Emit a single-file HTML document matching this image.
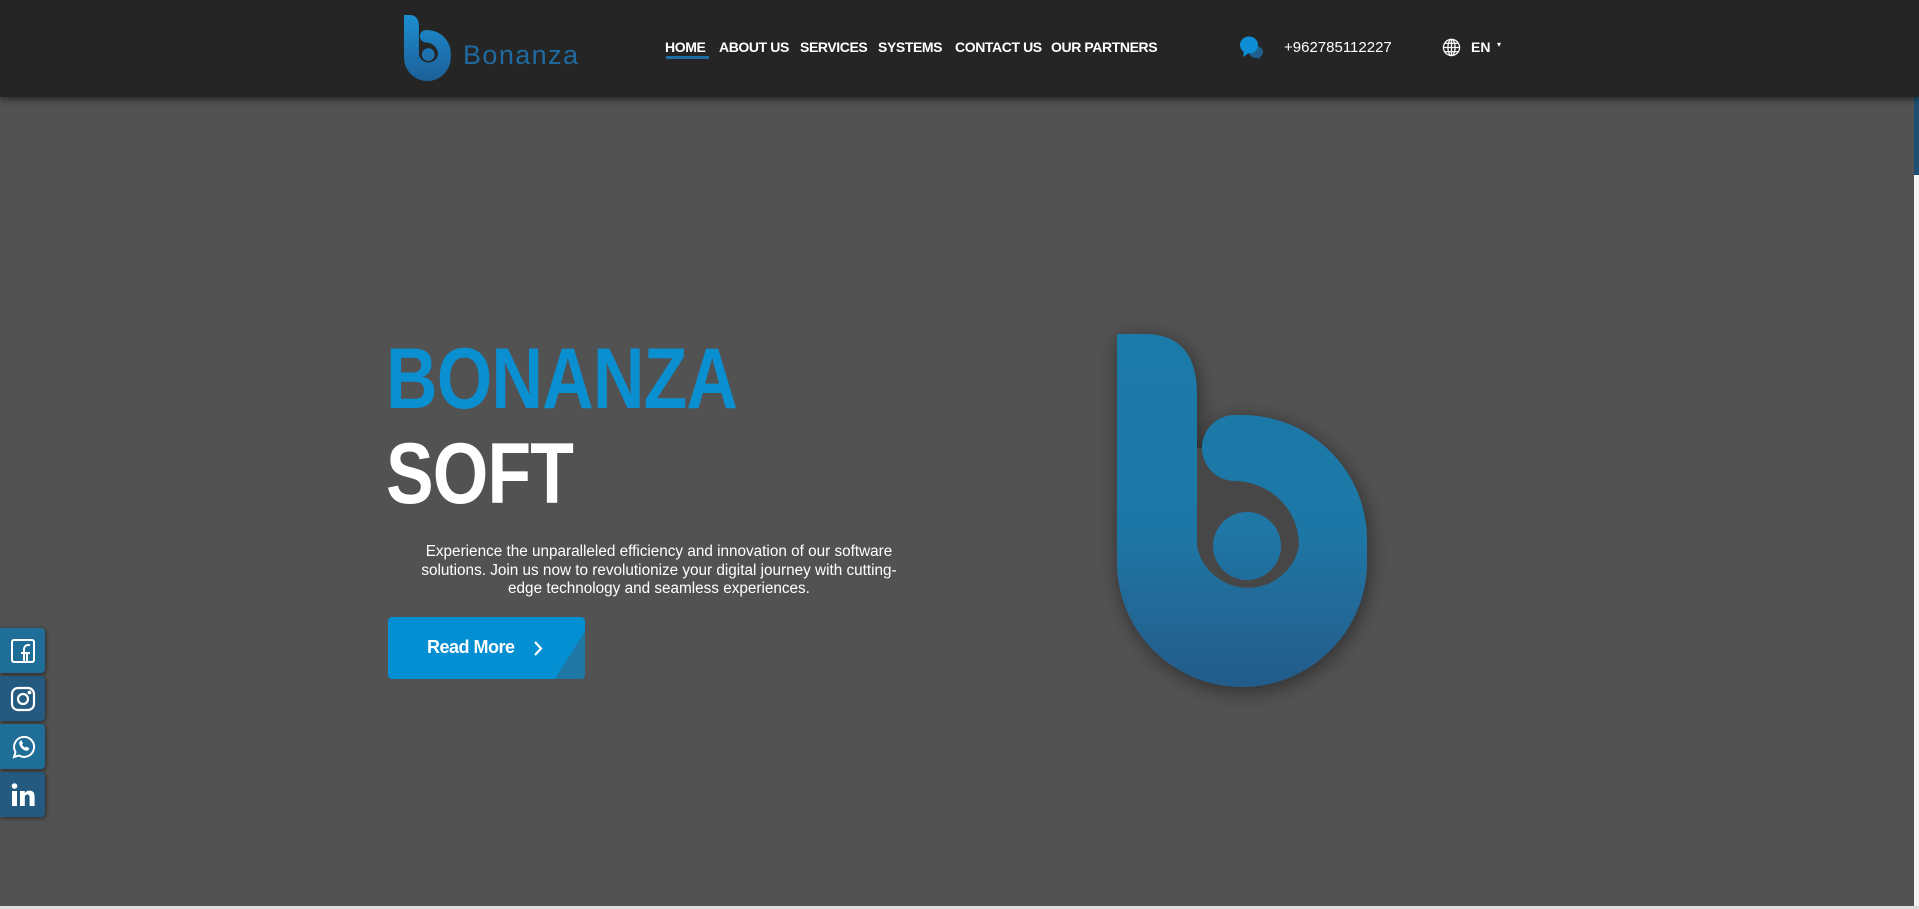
<!DOCTYPE html>
<html><head><meta charset="utf-8"><style>
*{margin:0;padding:0;box-sizing:border-box}
body{width:1919px;height:909px;overflow:hidden;background:#525252;font-family:"Liberation Sans",sans-serif;position:relative}
.hdr{position:absolute;left:0;top:0;width:1919px;height:97px;background:#252525;box-shadow:0 3px 6px rgba(0,0,0,.45);z-index:5}
.nav{position:absolute;top:39px;color:#fff;font-weight:bold;font-size:14px;letter-spacing:-0.4px;white-space:nowrap}
.t{position:absolute;white-space:nowrap}
.soc{position:absolute;left:0;width:45px;height:45px;border-radius:0 4px 4px 0;box-shadow:1px 1px 4px rgba(0,0,0,.5);display:flex;align-items:center;justify-content:center}
</style></head><body>
<svg width="0" height="0" style="position:absolute">
  <defs>
    <linearGradient id="g" x1="0" y1="334" x2="0" y2="687" gradientUnits="userSpaceOnUse"><stop offset="0" stop-color="#1f7aa8"/><stop offset="0.55" stop-color="#1f77a6"/><stop offset="1" stop-color="#225b8a"/></linearGradient>
    <linearGradient id="g2" x1="0" y1="334" x2="0" y2="687" gradientUnits="userSpaceOnUse"><stop offset="0" stop-color="#1b8fd0"/><stop offset="1" stop-color="#1d5f98"/></linearGradient>
  </defs>
</svg>
<div class="hdr">
  <svg style="position:absolute;left:0;top:0" width="700" height="97">
    <g transform="translate(195.1,-47.5) scale(0.187)">
      <path fill="url(#g2)" d="M1117 334 L1145 334 Q1197 334 1197 395 L1197 562 L1117 562 Z"/>
      <path fill="url(#g2)" d="M1235 415 L1242 415 A125 125 0 0 1 1367 540 L1367 562 A125 125 0 0 1 1117 562 L1197 562 L1197 448 L1202 448 A33 33 0 0 1 1235 415 Z"/>
      <path fill="#252525" d="M1202 448 A33 33 0 0 0 1235 481 C1265 481 1299 505 1299 546 A52 52 0 0 1 1197 546 L1197 448 Z"/>
      <circle cx="1247" cy="546" r="34" fill="url(#g2)"/>
    </g>
  </svg>
  <div class="t" style="left:463px;top:40px;color:#1f6aa0;font-size:27px;letter-spacing:1.4px">Bonanza</div>
  <div class="nav" style="left:665px">HOME</div>
  <div style="position:absolute;left:666px;top:56px;width:43px;height:3px;background:#1d6fa3"></div>
  <div class="nav" style="left:719px">ABOUT US</div>
  <div class="nav" style="left:800px">SERVICES</div>
  <div class="nav" style="left:878px">SYSTEMS</div>
  <div class="nav" style="left:955px">CONTACT US</div>
  <div class="nav" style="left:1051px">OUR PARTNERS</div>
  <svg style="position:absolute;left:1239px;top:35px" width="26" height="26" viewBox="0 0 26 26">
    <ellipse cx="17" cy="17" rx="7" ry="6" fill="#1d5f8e"/><path d="M17 21 l4 4 -1-5z" fill="#1d5f8e"/>
    <ellipse cx="10" cy="10" rx="9" ry="8.5" fill="#0d8ed6"/><path d="M5 16 l-1 6 6-4z" fill="#0d8ed6"/>
  </svg>
  <div class="t" style="left:1284px;top:39px;color:#fff;font-size:15px">+962785112227</div>
  <svg style="position:absolute;left:1442px;top:38px" width="19" height="19" viewBox="0 0 20 20" fill="none" stroke="#fff" stroke-width="1.3">
    <circle cx="10" cy="10" r="8.5"/><ellipse cx="10" cy="10" rx="3.8" ry="8.5"/><path d="M1.5 10h17M3 5.5h14M3 14.5h14M10 1.5v17"/>
  </svg>
  <div class="t" style="left:1471px;top:39px;color:#fff;font-size:14px;font-weight:bold">EN</div>
  <div class="t" style="left:1497px;top:40px;color:#fff;font-size:8px">▾</div>
</div>
<div style="position:absolute;left:1914px;top:97px;width:5px;height:78px;background:#1d4f72"></div>
<div style="position:absolute;left:1914px;top:175px;width:5px;height:734px;background:#f4f4f4"></div>
<div style="position:absolute;left:0;top:906px;width:1919px;height:3px;background:#dcdcdc"></div>

<div class="t" style="left:386px;top:330px;color:#0a8fd1;font-size:86px;font-weight:bold;transform:scaleX(0.83);transform-origin:left top;letter-spacing:-1px">BONANZA</div>
<div class="t" style="left:386px;top:425px;color:#fff;font-size:86px;font-weight:bold;transform:scaleX(0.83);transform-origin:left top;letter-spacing:-1px">SOFT</div>
<div style="position:absolute;left:389px;top:543px;width:540px;text-align:center;color:#fff;font-size:15.3px;line-height:18.5px">Experience the unparalleled efficiency and innovation of our software<br>solutions. Join us now to revolutionize your digital journey with cutting-<br>edge technology and seamless experiences.</div>
<div style="position:absolute;left:388px;top:617px;width:197px;height:62px;background:#038fd1;border-radius:4px;overflow:hidden">
  <svg style="position:absolute;left:0;top:0" width="197" height="62"><path d="M197 14 L197 62 L167 62 Z" fill="#1f77a6"/></svg>
  <div class="t" style="left:39px;top:20px;color:#fff;font-weight:bold;font-size:18px;letter-spacing:-0.5px">Read More</div>
  <svg style="position:absolute;left:144px;top:23px" width="12" height="17" viewBox="0 0 12 17"><path d="M3 2l6 6.5-6 6.5" stroke="#fff" stroke-width="2.2" fill="none"/></svg>
</div>

<div class="soc" style="top:628px;background:#1f6e98"><svg width="26" height="26" viewBox="0 0 26 26" fill="none" stroke="#fff" stroke-width="2"><rect x="2" y="2" width="22" height="22" rx="2"/><path d="M17 24v-9h3M14 24V11a4 4 0 0 1 4-4h2M11 15h8"/></svg></div>
<div class="soc" style="top:676px;background:#245a80"><svg width="26" height="26" viewBox="0 0 26 26" fill="none" stroke="#fff" stroke-width="2.2"><rect x="2" y="2" width="22" height="22" rx="6"/><circle cx="13" cy="13" r="5"/><circle cx="19.5" cy="6.5" r="0.8" fill="#fff"/></svg></div>
<div class="soc" style="top:724px;background:#1f6e98"><svg width="26" height="26" viewBox="0 0 26 26" fill="none" stroke="#fff" stroke-width="2"><path d="M4 23l1.5-5A10 10 0 1 1 9 21.5z"/><path d="M9.5 8.5c0 4 3.5 8 8 8l1.5-2-2.5-1.5-1.2 1c-1.5-.6-3-2-3.6-3.6l1-1.2L11 6.5z" fill="#fff" stroke-width="0.6"/></svg></div>
<div class="soc" style="top:772px;background:#245a80"><svg width="26" height="26" viewBox="0 0 26 26" fill="#fff"><circle cx="4.5" cy="4" r="2.8"/><rect x="2" y="9" width="5" height="15"/><path d="M10 9h4.8v2.2c.9-1.6 2.6-2.6 4.8-2.6 3.3 0 5 2 5 6V24h-5v-8.5c0-2-.7-3-2.3-3s-2.5 1.1-2.5 3V24H10z"/></svg></div>

<svg style="position:absolute;left:0;top:0" width="1919" height="909" viewBox="0 0 1919 909">
  <defs>
    <filter id="sh" x="-30%" y="-30%" width="160%" height="160%"><feGaussianBlur in="SourceAlpha" stdDeviation="10"/><feOffset dx="2" dy="4"/><feComponentTransfer><feFuncA type="linear" slope="0.45"/></feComponentTransfer><feMerge><feMergeNode/><feMergeNode in="SourceGraphic"/></feMerge></filter>
  </defs>
  <g filter="url(#sh)">
    <path fill="url(#g)" d="M1117 334 L1145 334 Q1197 334 1197 395 L1197 562 L1117 562 Z"/>
    <path fill="url(#g)" d="M1235 415 L1242 415 A125 125 0 0 1 1367 540 L1367 562 A125 125 0 0 1 1117 562 L1197 562 L1197 448 L1202 448 A33 33 0 0 1 1235 415 Z"/>
  </g>
  <path fill="#474747" d="M1202 448 A33 33 0 0 0 1235 481 C1265 481 1299 505 1299 546 A52 52 0 0 1 1197 546 L1197 448 Z"/>
  <circle cx="1247" cy="546" r="34" fill="url(#g)"/>
</svg>
</body></html>
